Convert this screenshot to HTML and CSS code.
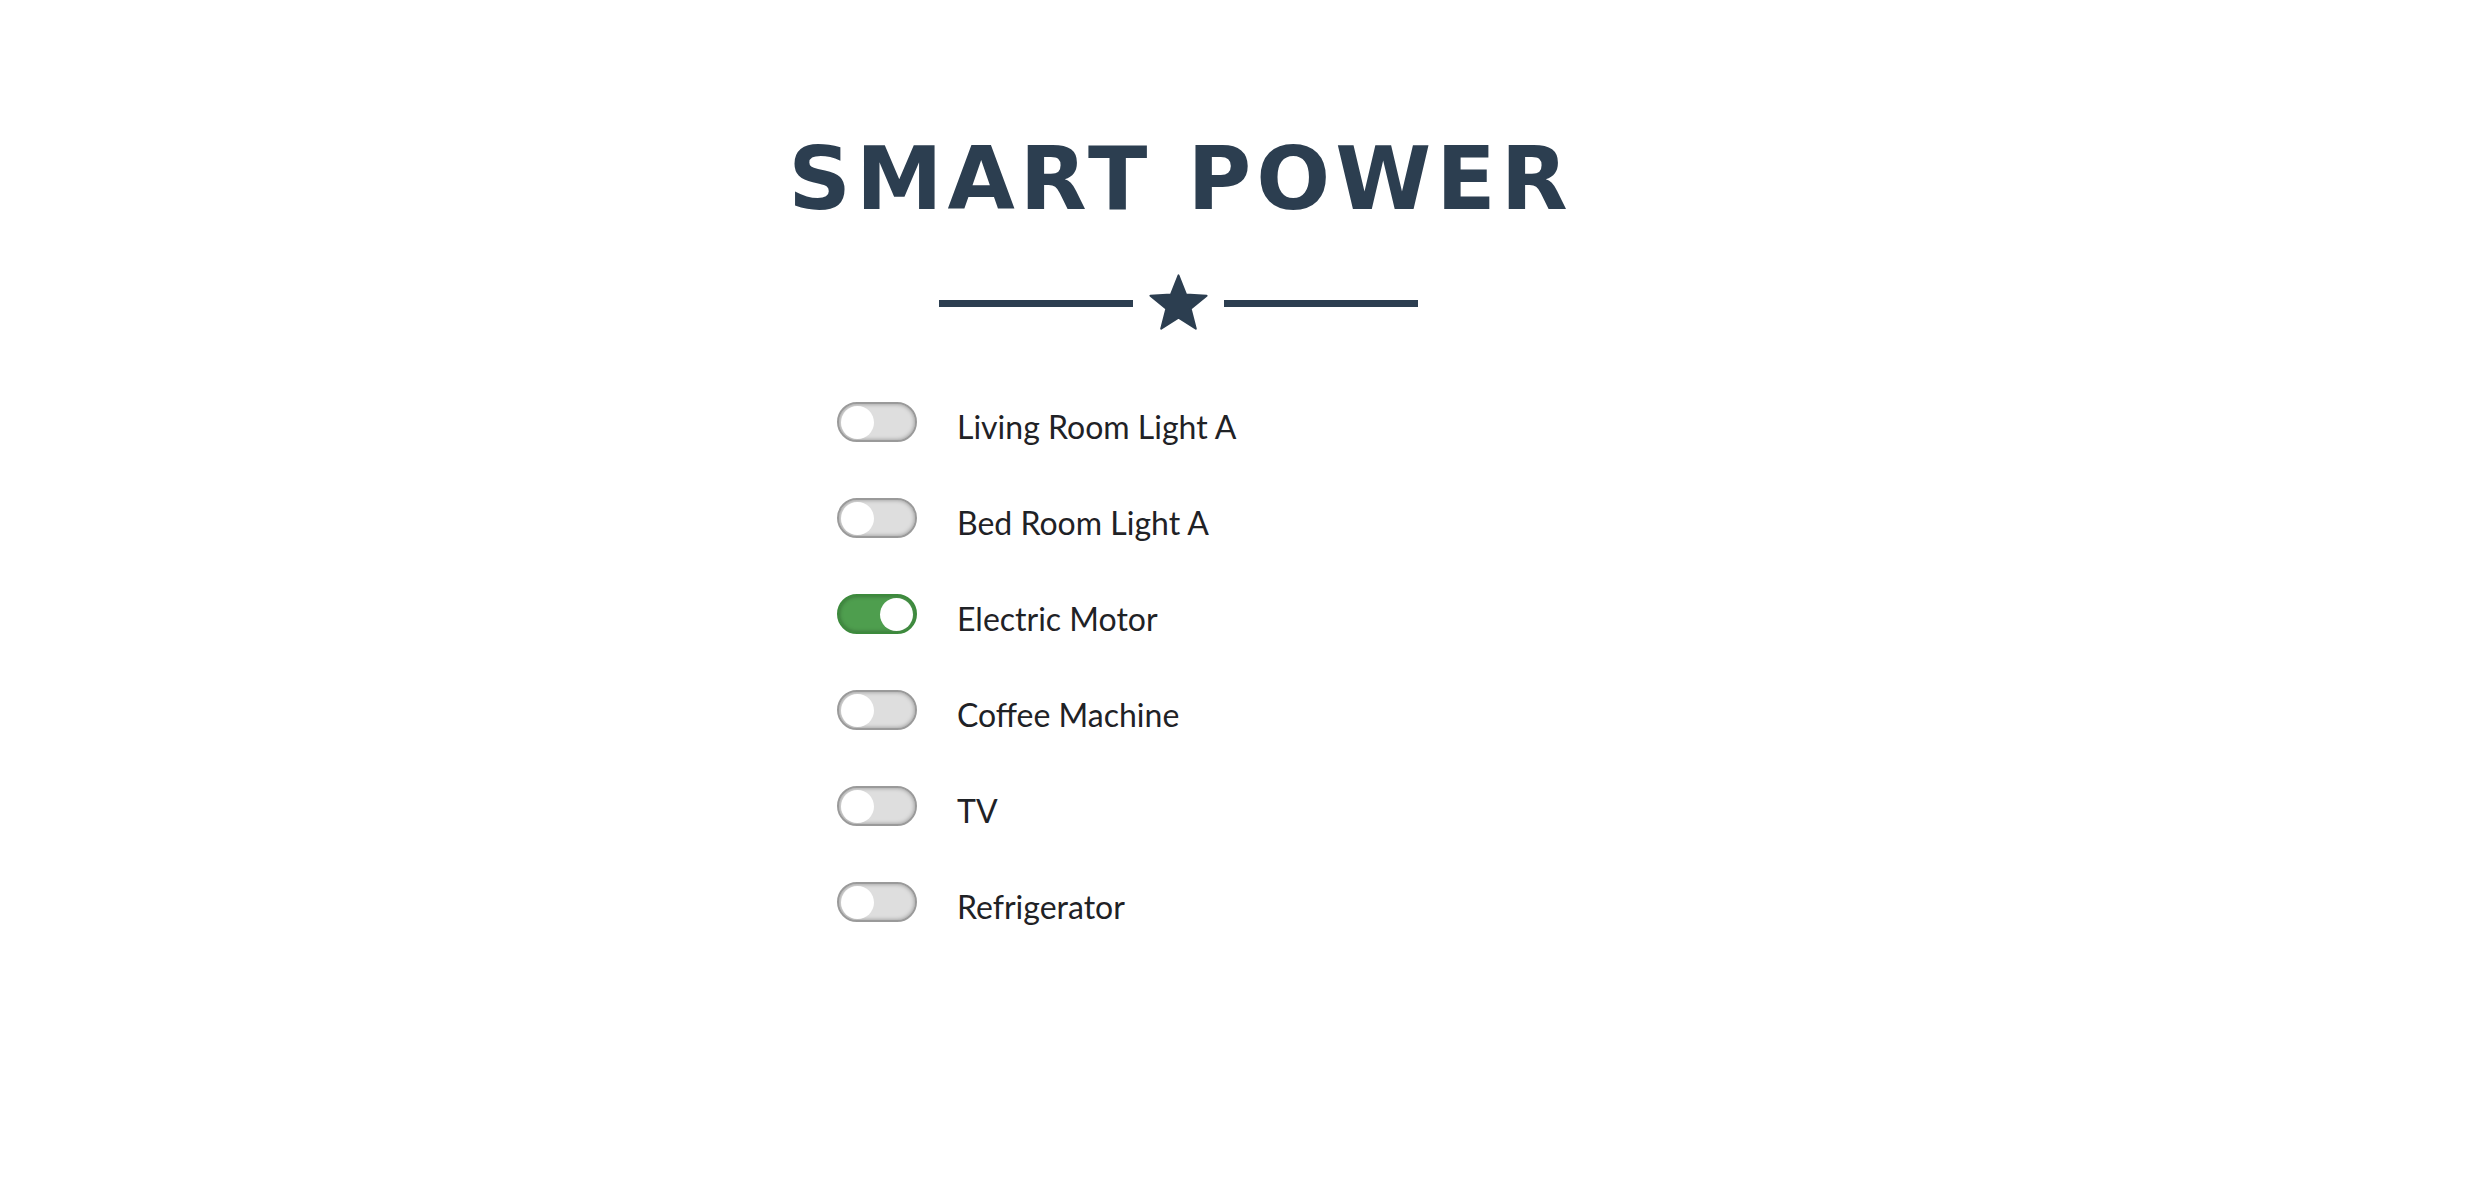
FILE: index.html
```html
<!DOCTYPE html>
<html lang="en">
<head>
<meta charset="utf-8">
<title>Smart Power</title>
<link rel="stylesheet" href="styles.css">
</head>
<body>
<main class="page">
  <h1 class="title">SMART POWER</h1>
  <div class="divider">
    <span class="divider-line"></span>
    <svg class="divider-star" viewBox="-32 -33 64 60" width="61" height="58" aria-hidden="true">
      <polygon points="0,-31 7.9,-10.9 29.5,-9.6 12.8,4.2 18.2,25.1 0,13.4 -18.2,25.1 -12.8,4.2 -29.5,-9.6 -7.9,-10.9" fill="#2c3e50" stroke="#2c3e50" stroke-width="2" stroke-linejoin="round"/>
    </svg>
    <span class="divider-line"></span>
  </div>
  <ul class="devices">
    <li class="device"><span class="switch"><span class="knob"></span></span><span class="label">Living Room Light A</span></li>
    <li class="device"><span class="switch"><span class="knob"></span></span><span class="label">Bed Room Light A</span></li>
    <li class="device"><span class="switch is-on"><span class="knob"></span></span><span class="label">Electric Motor</span></li>
    <li class="device"><span class="switch"><span class="knob"></span></span><span class="label">Coffee Machine</span></li>
    <li class="device"><span class="switch"><span class="knob"></span></span><span class="label">TV</span></li>
    <li class="device"><span class="switch"><span class="knob"></span></span><span class="label">Refrigerator</span></li>
  </ul>
</main>
</body>
</html>
```
FILE: styles.css
```css
* { box-sizing: border-box; }
html, body { margin: 0; padding: 0; background: #fff; }
body { font-family: "Lato", "Liberation Sans", sans-serif; color: #212529; }

.page {
  width: 2356px;
  display: flex;
  flex-direction: column;
  align-items: center;
  padding: 136px 0 120px;
}

.title {
  margin: 0 -5px 0 0;
  font-family: "DejaVu Sans", "Liberation Sans", sans-serif;
  font-weight: 700;
  font-size: 87px;
  line-height: 1;
  letter-spacing: 5px;
  color: #2c3e50;
}

.divider {
  display: flex;
  align-items: center;
  gap: 15px;
  margin-top: 50px;
}
.divider-line {
  display: block;
  width: 194px;
  height: 7px;
  background: #2c3e50;
  margin-top: 3px;
}
.divider-star { display: block; }

.devices {
  list-style: none;
  margin: 71px 0 0;
  padding: 0;
  width: 682px;
  display: flex;
  flex-direction: column;
  gap: 56px;
}
.device {
  display: flex;
  align-items: center;
  gap: 40px;
}
.switch {
  position: relative;
  flex: none;
  width: 80px;
  height: 40px;
  border-radius: 20px;
  border: 2px solid #9a9a9a;
  background: #dedede;
  box-shadow: inset 0 0 4px rgba(0,0,0,0.35);
}
.switch .knob {
  position: absolute;
  top: 2px;
  left: 2px;
  width: 33px;
  height: 33px;
  border-radius: 50%;
  background: #fff;
}
.switch.is-on {
  border-color: #3c8a3c;
  background: #4e9e4e;
}
.switch.is-on .knob {
  left: auto;
  right: 2px;
}
.label {
  font-size: 32px;
  line-height: 40px;
  padding-top: 5px;
  margin-bottom: -5px;
  color: #1f2226;
}
```
